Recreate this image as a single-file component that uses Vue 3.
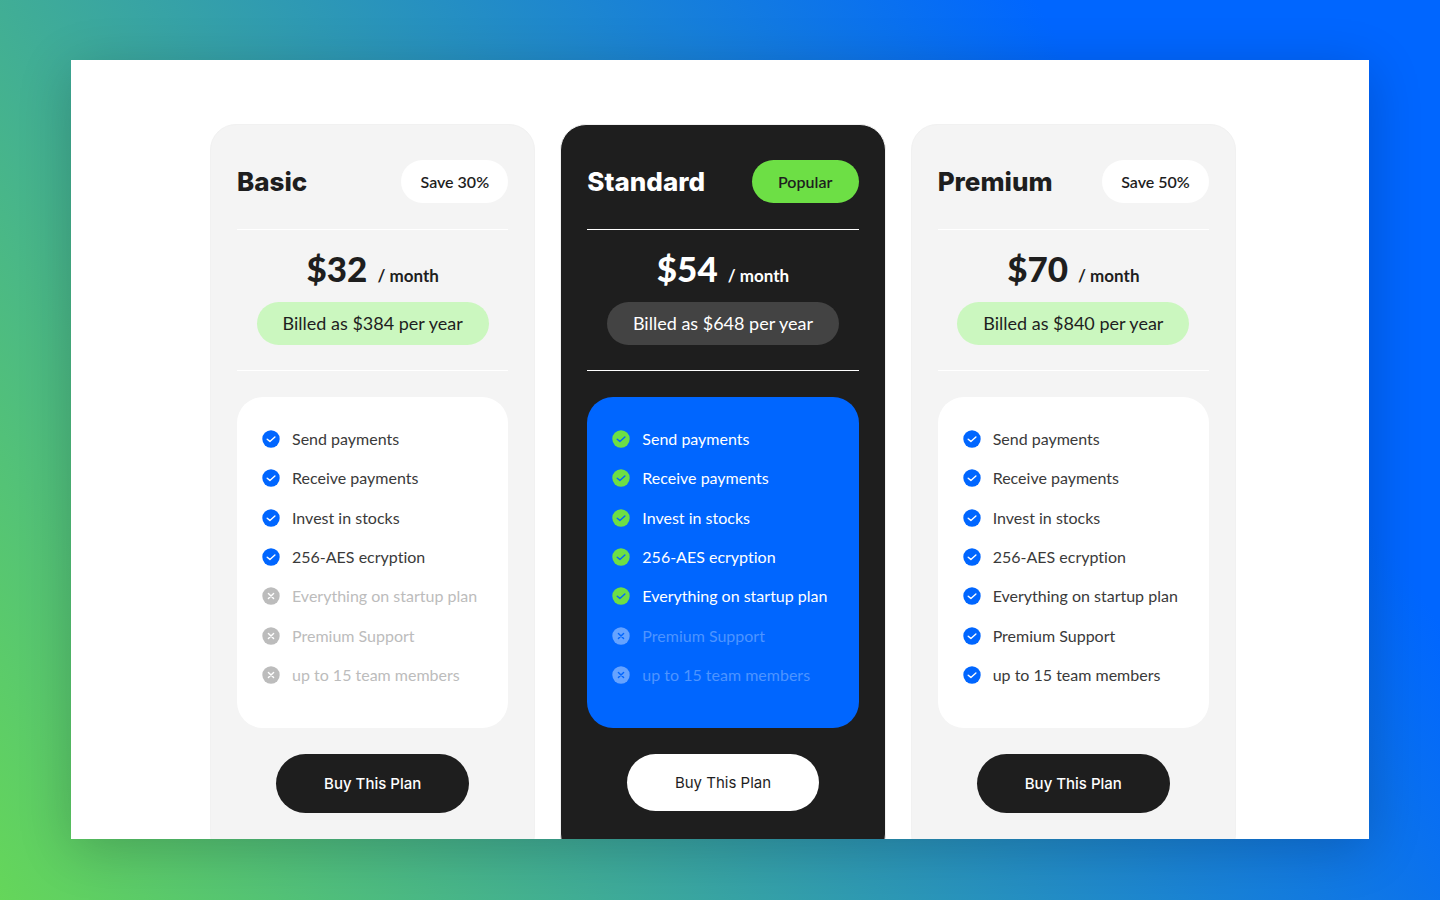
<script setup>
const plans = [
  { name: "Basic", badge: "Save 30%", price: 32, yearly: 384, included: 4, type: "light" },
  { name: "Standard", badge: "Popular", price: 54, yearly: 648, included: 5, type: "popular" },
  { name: "Premium", badge: "Save 50%", price: 70, yearly: 840, included: 7, type: "light" },
];

const features = [
  "Send payments",
  "Receive payments",
  "Invest in stocks",
  "256-AES ecryption",
  "Everything on startup plan",
  "Premium Support",
  "up to 15 team members",
];
</script>

<template>
  <div class="page">
    <main class="panel">
      <section class="plans">
        <article v-for="plan in plans" :key="plan.name" class="card" :class="plan.type">
          <header class="card-header">
            <h2>{{ plan.name }}</h2>
            <span class="badge">{{ plan.badge }}</span>
          </header>
          <div class="pricing">
            <p class="price">
              <strong>${{ plan.price }}</strong>
              <span>/ month</span>
            </p>
            <p class="billed">Billed as ${{ plan.yearly }} per year</p>
          </div>
          <ul class="features">
            <li v-for="(feature, i) in features" :key="feature" :class="{ off: i >= plan.included }">
              <svg viewBox="0 0 18 18" aria-hidden="true">
                <circle cx="9" cy="9" r="8.7" />
                <path v-if="i < plan.included" d="M5.2 9.2 L7.9 11.4 L12.9 6.9" />
                <path v-else d="M6.4 6.4 L11.6 11.6 M11.6 6.4 L6.4 11.6" />
              </svg>
              {{ feature }}
            </li>
          </ul>
          <button type="button" class="buy">Buy This Plan</button>
        </article>
      </section>
    </main>
  </div>
</template>

<style>
body {
  margin: 0;
}
</style>

<style scoped>
* {
  box-sizing: border-box;
}

.page {
  height: 100vh;
  padding: 60px 71px 61px;
  overflow: hidden;
  font-family: Lato, "Open Sans", sans-serif;
  font-variant-ligatures: none;
  color: #1e1e1e;
  background: linear-gradient(57deg, #65d65a 0%, #0066ff 80%);
}

.panel {
  height: 100%;
  padding: 64px 133px 0 139px;
  overflow: hidden;
  background: #fff;
  box-shadow: 0 10px 50px rgba(0, 0, 0, 0.2);
}

.plans {
  display: grid;
  grid-template-columns: repeat(3, 1fr);
  gap: 25px;
}

.card {
  display: flex;
  flex-direction: column;
  padding: 35px 26px 46px;
  border: 1px solid #f1f1f1;
  border-radius: 26px;
  background: #f4f4f4;
}

.card-header {
  display: flex;
  align-items: center;
  justify-content: space-between;
  padding-bottom: 26px;
  border-bottom: 1px solid #fff;
}

h2 {
  margin: 0;
  font-family: Inter, sans-serif;
  font-size: 26px;
  line-height: 32px;
  font-weight: 800;
}

.badge {
  width: 107px;
  border-radius: 22px;
  background: #fff;
  font-size: 16px;
  line-height: 43px;
  font-weight: 600;
  text-align: center;
}

.pricing {
  display: flex;
  flex-direction: column;
  align-items: center;
  padding: 16px 0 25px;
  border-bottom: 1px solid #fff;
}

.price {
  display: flex;
  align-items: baseline;
  gap: 10px;
  margin: 0;
  line-height: 44px;
  font-weight: 700;
}

.price strong {
  font-size: 35px;
}

.price span {
  font-size: 17px;
}

.billed {
  margin: 4px 0 0;
  padding: 0 26px;
  border-radius: 22px;
  background: #cbf7bf;
  font-size: 18px;
  line-height: 43px;
}

.features {
  display: flex;
  flex-direction: column;
  justify-content: space-between;
  min-height: 331px;
  margin: 26px 0;
  padding: 32px 25px 43px;
  border-radius: 26px;
  background: #fff;
  list-style: none;
  color: #3a3a3a;
  font-size: 16px;
  line-height: 20px;
  white-space: nowrap;
}

li {
  display: flex;
  align-items: center;
  gap: 12px;
}

svg {
  width: 18px;
  height: 18px;
  fill: #0066ff;
}

svg path {
  fill: none;
  stroke: #fff;
  stroke-width: 1.4;
  stroke-linecap: round;
  stroke-linejoin: round;
}

.off {
  color: #bcbcbc;
}

.off svg {
  fill: #bcbcbc;
}

.buy {
  align-self: center;
  padding: 0 48px;
  border: 0;
  border-radius: 30px;
  background: #1e1e1e;
  color: #fff;
  font-family: Inter, sans-serif;
  font-size: 15px;
  line-height: 59px;
  font-weight: 500;
  cursor: pointer;
}

.popular {
  background: #1e1e1e;
  color: #fff;
}

.popular .badge {
  background: #6ddf45;
  color: #1e1e1e;
}

.popular .billed {
  background: #434343;
}

.popular .features {
  background: #0066ff;
  color: #fff;
}

.popular svg {
  fill: #6ddf45;
}

.popular svg path {
  stroke: #0066ff;
}

.popular .off {
  color: #4d94ff;
}

.popular .off svg {
  fill: #66a3ff;
}

.popular .buy {
  background: #fff;
  color: #1e1e1e;
  line-height: 57px;
  font-weight: 400;
}
</style>
